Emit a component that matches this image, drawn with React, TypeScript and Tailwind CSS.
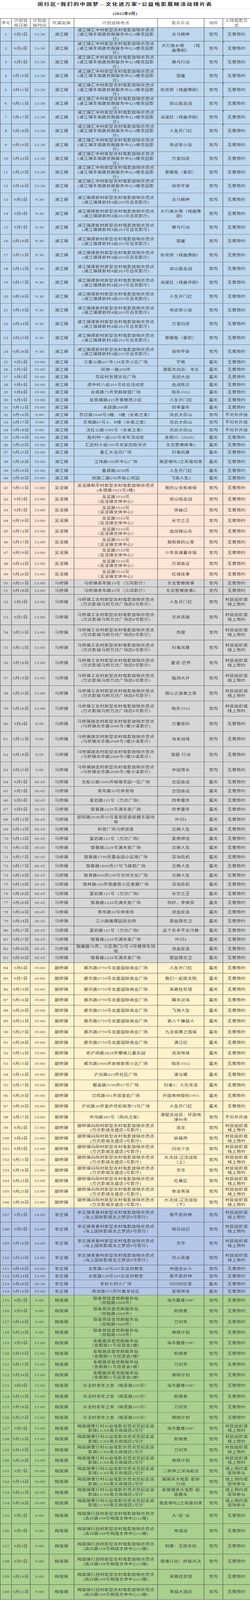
import React from "react";

type Row = {
  no: number;
  date: string;
  time: string;
  town: string;
  place: string;
  film: string;
  venue: string;
  entry: string;
  h: string;
  bg: string;
  flag?: boolean;
};

const BLUE = "bg-[#bdd7ee]";
const PEACH = "bg-[#fce4d6]";
const GRAY = "bg-[#d6d6d6]";
const YELLOW = "bg-[#fff2cc]";
const SKY = "bg-[#b4c6e7]";
const GREEN = "bg-[#a9d08e]";

// row heights, one constant per band of rows
const H_A = "h-[44.33px]";
const H_B = "h-[24.18px]";
const H_C = "h-[35px]";
const H_D = "h-[24px]";
const H_E = "h-[38.3px]";
const H_F = "h-[34.4px]";
const H_G = "h-[23.8px]";
const H_H = "h-[49px]";
const H_I = "h-[29.75px]";
const H_J = "h-[34.3px]";
const H_K = "h-[29.5px]";
const H_L = "h-[34.25px]";
const H_M = "h-[46px]";
const H_N = "h-[24.3px]";
const H_O = "h-[48.95px]";

const E1 = "无需预约";
const E2 = "不对外开放";
const E3 = "村居组织或\n线上预约";
const E4 = "线上预约或\n现场参与";

const P1 = "浦江镇汇中村新型农村电影放映示范点\n(浦江镇丰南路党群服务中心3楼花田影\n厅)";
const P2 = "浦江镇建新村新型农村电影放映示范点\n(浦江镇建新村4组203号百花影厅)";
const P3 = "龙吴路5533号\n（吴泾镇文体中心）";
const P4 = "马桥镇青年路33号（三冈影厅）";
const P5 = "马桥镇工农村新型农村电影放映示范点\n(万达影城马桥万达广场店8号影厅)";
const P6 = "马桥镇旗忠村新型农村电影放映示范点\n(马桥镇光华路2688号1楼沙溪影厅)";
const P7 = "都市路3759号龙盛国际商业广场";
const P8 = "颛桥镇向阳村新型农村电影放映示范点\n(万达影城龙盛店3号影厅)";
const P9 = "莘庄镇青春村新型农村电影放映示范点\n(海上国际影城龙之梦店8号影厅)";
const P10 = "龙茗路128号205东吴村教室";
const P11 = "银泰苑居委党群服务站\n（双柏路1668弄）";
const P12 = "金都路居委党群服务站\n（金都路51号居委会2楼）";
const P13 = "许泾村老年之家（梅莲路103号）";
const P14 = "梅陇镇曹行村公益电影示范点世纪友谊\n影城LUXE南方商城店2号厅";
const P15 = "梅陇镇行西村新型农村电影放映示范点\n(高兴路108号梅陇文体中心12楼)";

const rows: Row[] = [];
const add = (
  town: string,
  bg: string,
  h: string,
  list: [string, string, string, string, string, string][],
  flag = false
) => {
  list.forEach(([date, time, place, film, venue, entry]) => {
    rows.push({ no: rows.length + 1, date, time, town, place, film, venue, entry, h, bg, flag });
  });
};

const PJ = "浦江镇";
const WJ = "吴泾镇";
const MQ = "马桥镇";
const ZQ = "颛桥镇";
const XZ = "莘庄镇";
const ML = "梅陇镇";

const d12 = ["9月3日", "9月4日", "9月5日", "9月10日", "9月11日", "9月12日", "9月17日", "9月18日", "9月19日", "9月24日", "9月25日", "9月26日"];
const f12 = ["龙马精神", "大行故乡情\u3000\u3000（戏\n曲豫剧）", "蜂鸟行动", "猎屠", "抬花轿（戏曲豫剧）", "双山狙击战", "海棠红（戏曲评剧）", "人生开门红", "奇迹笨小孩", "万里归途", "窦娥冤（秦腔）", "保你平安"];

add(PJ, BLUE, H_A, d12.slice(0, 8).map((d, i) => [d, "13:30", P1, f12[i], "室内", E1]), true);
add(PJ, BLUE, H_A, d12.slice(8).map((d, i) => [d, "13:30", P1, f12[i + 8], "室内", E1]));
add(PJ, BLUE, H_A, d12.map((d, i) => [d, "9:30", P2, i === 1 ? "大行故乡情（戏曲豫\n剧）" : f12[i], "室内", E1]));
add(PJ, BLUE, H_B, [
  ["9月2日", "19:00", "三鲁公路467弄128支弄小区广场", "学爸", "露天", E1],
  ["9月3日", "19:00", "闵驰一路208弄", "潜艇总动员：寻龙", "露天", E1],
  ["9月5日", "19:00", "苏民村党建文化广场", "百团大战", "露天", E1],
  ["9月6日", "19:00", "建中村八组201号综合活动室", "血战陈庄", "露天", E1],
  ["9月8日", "19:00", "永南路75弄党群联盟广场", "暗杀1932", "露天", E1],
  ["9月9日", "19:00", "盐铁塘路435弄香樟苑小区", "人生开门红", "露天", E1],
  ["9月12日", "19:00", "永跃路208弄", "四季童年", "露天", E1],
  ["9月16日", "9:00", "苏召路1648号3幢、5幢（长者之家）", "风云大白山", "室内", E2],
  ["9月17日", "9:00", "丰南路81号A、B楼（长者之家）", "风云大白山", "室内", E2],
  ["9月18日", "9:00", "沈杜公路1586号（长者之家）", "风云大白山", "室内", E2],
  ["9月19日", "19:00", "胜利村一组205号老年活动室", "金刚川（2020）", "露天", E1],
  ["9月20日", "19:00", "汇西村十组100号肖家店睦邻点", "东北警察故事2", "露天", E1],
  ["9月25日", "19:00", "鲁汇大治河广场", "扫毒风暴", "露天", E1],
]);
add(PJ, BLUE, H_C, [["9月26日", "19:00", "江玮路100弄中心广场", "我是哪吒2之英雄归来", "露天", E1]]);
add(PJ, BLUE, H_D, [
  ["9月29日", "19:00", "鲁建路2658弄", "人生开门红", "露天", E1],
  ["9月30日", "19:00", "闵驰二路256弄街心花园", "飞驰人生2", "露天", E1],
]);
add(WJ, PEACH, H_E, [["9月11日", "13:00", "吴泾镇和平村新型农村电影放映示范点\n(永德路1023号3楼)", "我的父亲焦裕禄", "室内", E1]]);
add(WJ, PEACH, H_F, [
  ["9月3日", "13:00", P3, "双山阻击战", "室内", E1],
  ["9月5日", "13:00", P3, "突破口", "室内", E1],
  ["9月10日", "13:00", P3, "长空之王", "室内", E1],
  ["9月12日", "13:00", P3, "血战微山岛", "室内", E1],
  ["9月17日", "13:00", P3, "我和我的父辈", "室内", E1],
  ["9月19日", "13:00", P3, "少年英雄董存瑞", "室内", E1],
  ["9月24日", "13:00", P3, "万湖会议", "室内", E1],
  ["9月26日", "13:00", P3, "红域往事", "室内", E1],
]);
add(MQ, GRAY, H_G, [
  ["9月11日", "13:00", P4, "东北警察故事", "室内", E1],
  ["9月18日", "13:00", P4, "东北警察故事2", "室内", E1],
]);
add(MQ, GRAY, H_H, [
  ["9月4日", "13:00", P5, "人生开门红", "室内", E3],
  ["9月5日", "13:00", P5, "市井英雄", "室内", E3],
  ["9月11日", "13:00", P5, "热搜", "室内", E3],
  ["9月12日", "13:00", P5, "扫毒风暴", "室内", E3],
  ["9月18日", "13:00", P5, "童话·世界", "室内", E3],
  ["9月19日", "13:00", P5, "脑洞大开", "室内", E3],
  ["9月25日", "13:00", P5, "猎心之迷毒之罪", "室内", E3],
  ["9月26日", "13:00", P5, "暗杀1932", "室内", E3],
  ["9月4日", "9:00", P6, "力量密码", "室内", E1],
  ["9月11日", "9:00", P6, "海关战线", "室内", E1],
  ["9月18日", "9:00", P6, "猎狐·行动", "室内", E1],
  ["9月25日", "9:00", P6, "中国营长", "室内", E1],
]);
add(MQ, GRAY, H_I, [
  ["9月5日", "18:45", "北松公路1600弄裕隆花园一区广场", "古田会议", "露天", E1],
  ["9月5日", "18:45", "青年路33号体育场", "古田会议", "露天", E1],
  ["9月6日", "18:45", "富岩路121号（万达广场）", "四季童年", "露天", E1],
  ["9月6日", "18:45", "银春路2226号满天星广场", "四季童年", "露天", E1],
]);
add(MQ, GRAY, H_J, [["9月12日", "18:45", "昆阳路2036弄35号富昆居委底楼东面场\n地", "叶问4", "露天", E1]]);
add(MQ, GRAY, H_K, [
  ["9月12日", "18:45", "科普广场马桥居委", "交换人生", "露天", E1],
  ["9月13日", "18:45", "富岩路121号（万达广场）", "爱情神话", "露天", E1],
  ["9月13日", "18:45", "银春路2226号满天星广场", "交换人生", "露天", E1],
  ["9月17日", "18:45", "银春路1799弄夏朵园小区南广场", "深海危机", "露天", E1],
  ["9月17日", "18:45", "银春路1800弄27号飞碟苑广场", "交换人生", "露天", E1],
  ["9月19日", "18:45", "联青路699弄258号元祥文化广场", "交换人生", "露天", E1],
  ["9月19日", "18:45", "银林路100弄银康苑小区紫藤广场", "深海危机", "露天", E1],
  ["9月20日", "18:45", "富岩路121号（万达广场）", "长空之王", "露天", E1],
  ["9月20日", "18:45", "银春路2226号满天星广场", "你好，李焕英", "露天", E1],
  ["9月24日", "18:45", "青年路33号体育场", "浴血反击", "露天", E1],
  ["9月24日", "18:45", "江川路雅儒园西北侧", "碧血锦衣卫", "露天", E1],
  ["9月27日", "18:45", "富岩路121号（万达广场）", "这个杀手不太冷静", "露天", E1],
  ["9月27日", "18:45", "银春路2226号满天星广场", "叶问4", "露天", E1],
  ["9月30日", "18:45", "银康路76弄，小区南门5号-6号楼停车场\n地", "浴血反击", "露天", E1],
  ["9月30日", "18:45", "银春路2226号满天星广场", "碧血锦衣卫", "露天", E1],
]);
add(ZQ, YELLOW, H_L, [
  ["9月6日", "19:00", P7, "人生开门红", "露天", E1],
  ["9月7日", "19:00", P7, "我们一起摇太阳", "露天", E1],
  ["9月13日", "19:00", P7, "末路狂花钱", "露天", E1],
  ["9月14日", "19:00", P7, "瞒天过海", "露天", E1],
  ["9月20日", "19:00", P7, "飞驰人生", "露天", E1],
  ["9月21日", "19:00", P7, "第八个嫌疑人", "露天", E1],
  ["9月27日", "19:00", P7, "九龙城寨之围城", "露天", E1],
  ["9月28日", "19:00", P7, "满江红", "露天", E1],
  ["9月12日", "19:00", "老沪闵路2828弄樱缘儿童乐园", "流浪地球", "露天", E1],
  ["9月15日", "19:00", "都市路1900弄金榜新苑小区广场", "暗杀1932", "露天", E1],
  ["9月16日", "19:00", "沪光路425弄社区广场", "谍与蝶", "露天", E1],
  ["9月17日", "19:00", "都会路3199弄67号广场", "扫毒3：人在天涯", "露天", E1],
  ["9月29日", "19:00", "灯辉路501弄居委后广场", "开国将帅授衔1955", "露天", E1],
  ["9月30日", "19:00", "沪光路39弄爱庐世纪新苑73号广场", "人生开门红", "露天", E1],
  ["9月17日", "14:00", "中沟路385号（阳光之家）", "潜艇总动员：环游地\n球80天", "室内", E2],
  ["9月2日", "13:00", P8, "追龙", "室内", E3],
  ["9月4日", "13:00", P8, "妖猫传", "室内", E3],
  ["9月9日", "13:00", P8, "闪光少女", "室内", E3],
  ["9月11日", "13:00", P8, "大决战-辽沈战役\n（上）", "室内", E3],
  ["9月16日", "13:00", P8, "芳华", "室内", E3],
  ["9月23日", "13:00", P8, "红番区", "室内", E3],
  ["9月25日", "13:00", P8, "奇迹男孩", "室内", E3],
  ["9月30日", "13:00", P8, "大决战-辽沈战役\n（下）", "室内", E3],
]);
add(XZ, SKY, H_M, [
  ["9月2日", "14:00", P9, "我不是药神", "室内", E3],
  ["9月9日", "14:00", P9, "明日战记", "室内", E3],
  ["9月16日", "14:00", P9, "芳华", "室内", E3],
  ["9月23日", "14:00", P9, "烈火英雄", "室内", E3],
]);
add(XZ, SKY, H_N, [
  ["9月10日", "14:00", P10, "中国合伙人", "室内", E1],
  ["9月24日", "14:00", P10, "我不是药神", "室内", E1],
  ["9月26日", "18:30", "莘松七村小广场", "闪闪的红星", "露天", E1],
  ["9月19日", "19:00", "秀涟路555弄阡集莘社区", "爱情神话", "露天", E1],
]);
add(ML, GREEN, H_L, [
  ["9月2日", "9:00", P11, "海市蜃楼1987", "室内", E1],
  ["9月9日", "9:00", P11, "假爸爸", "室内", E1],
  ["9月16日", "9:00", P11, "刀剑笑", "室内", E1],
  ["9月23日", "9:00", P11, "佛晓计划", "室内", E1],
  ["9月3日", "13:00", P12, "海市蜃楼1987", "室内", E1],
  ["9月10日", "13:00", P12, "假爸爸", "室内", E1],
  ["9月17日", "13:00", P12, "刀剑笑", "室内", E1],
  ["9月24日", "13:00", P12, "佛晓计划", "室内", E1],
  ["9月4日", "13:00", P13, "海市蜃楼1987", "室内", E1],
  ["9月11日", "13:00", P13, "假爸爸", "室内", E1],
  ["9月18日", "13:00", P13, "刀剑笑", "室内", E1],
  ["9月25日", "13:00", P13, "佛晓计划", "室内", E1],
  ["9月5日", "13:00", P14, "海市蜃楼1987", "室内", E3],
  ["9月12日", "13:00", P14, "假爸爸", "室内", E3],
  ["9月19日", "13:00", P14, "刀剑笑", "室内", E3],
  ["9月26日", "13:00", P14, "佛晓计划", "室内", E3],
  ["9月7日", "10:00", P14, "二郎神之深海蛟龙", "室内", E4],
  ["9月14日", "10:00", P14, "猪猪侠大电影·星际\n行动", "室内", E4],
  ["9月21日", "10:00", P14, "新猪猪侠大电影·超\n级赛车", "室内", E4],
  ["9月28日", "10:00", P14, "我是哪吒2之英雄归来", "室内", E4],
]);
add(ML, GREEN, H_O, [
  ["9月2日", "9:00", P15, "大“反”派", "室内", E1],
  ["9月3日", "9:00", P15, "地道战", "室内", E1],
  ["9月4日", "9:00", P15, "制暴：无限杀机", "室内", E1],
  ["9月9日", "9:00", P15, "猎毒行动：终极对决", "室内", E1],
  ["9月10日", "9:00", P15, "末路狂花钱", "室内", E1],
  ["9月11日", "9:00", P15, "来福大酒店", "室内", E1],
]);

const FRAME = "w-[640px] h-[4096px] overflow-hidden bg-white";
const SHEET = "w-[640px] origin-top scale-y-[0.79642] bg-white font-['Liberation_Serif','Noto_Sans_CJK_SC',serif] text-[11px] tracking-[0.6px] text-[#404040]";
const COLS = "grid grid-cols-[29px_48px_48px_64px_214px_119px_48px_70px]";
const CELL =
  "relative flex items-center justify-center text-center border-r border-[#3f3f3f] overflow-hidden whitespace-pre-line leading-[14.7px] px-[1px]";
const TITLE = "h-[29px] flex items-center justify-center border-b border-[#e3e3e3] text-[14px] font-bold tracking-[2.5px] text-[#1e1e1e]";
const SUB = "h-[30px] flex items-center justify-center font-bold text-[#222]";
const HEAD = "h-[30px] bg-white border-t border-b border-[#3f3f3f] text-[#606060]";
const FLAG = "absolute left-0 top-0 w-0 h-0 border-t-[4px] border-r-[4px] border-t-[#2f9b3c] border-r-transparent";

const HEADERS = ["序号", "计划放\n映日期", "计划放\n映时间", "所属街镇", "计划放映地点", "影片片名", "场所", "入场观影方\n式"];

const App = () => {
  return (
    <div className={FRAME}>
      <div className={SHEET}>
        <div className={TITLE}>闵行区“我们的中国梦—文化进万家”公益电影展映活动排片表</div>
        <div className={SUB}>(2025年9月)</div>
        <div className="border-l border-[#3f3f3f]">
          <div className={`${COLS} ${HEAD}`}>
            {HEADERS.map((h) => (
              <div key={h} className={CELL}>
                {h}
              </div>
            ))}
          </div>
          {rows.map((r) => (
            <div key={r.no} className={`${COLS} ${r.h} ${r.bg} border-b border-[#3f3f3f]`}>
              <div className={CELL}>{r.no}</div>
              <div className={CELL}>{r.date}</div>
              <div className={CELL}>{r.time}</div>
              <div className={CELL}>{r.town}</div>
              <div className={CELL}>{r.place}</div>
              <div className={CELL}>{r.film}</div>
              <div className={CELL}>{r.venue}</div>
              <div className={CELL}>
                {r.flag && <span className={FLAG} />}
                {r.entry}
              </div>
            </div>
          ))}
        </div>
      </div>
    </div>
  );
};

export default App;
